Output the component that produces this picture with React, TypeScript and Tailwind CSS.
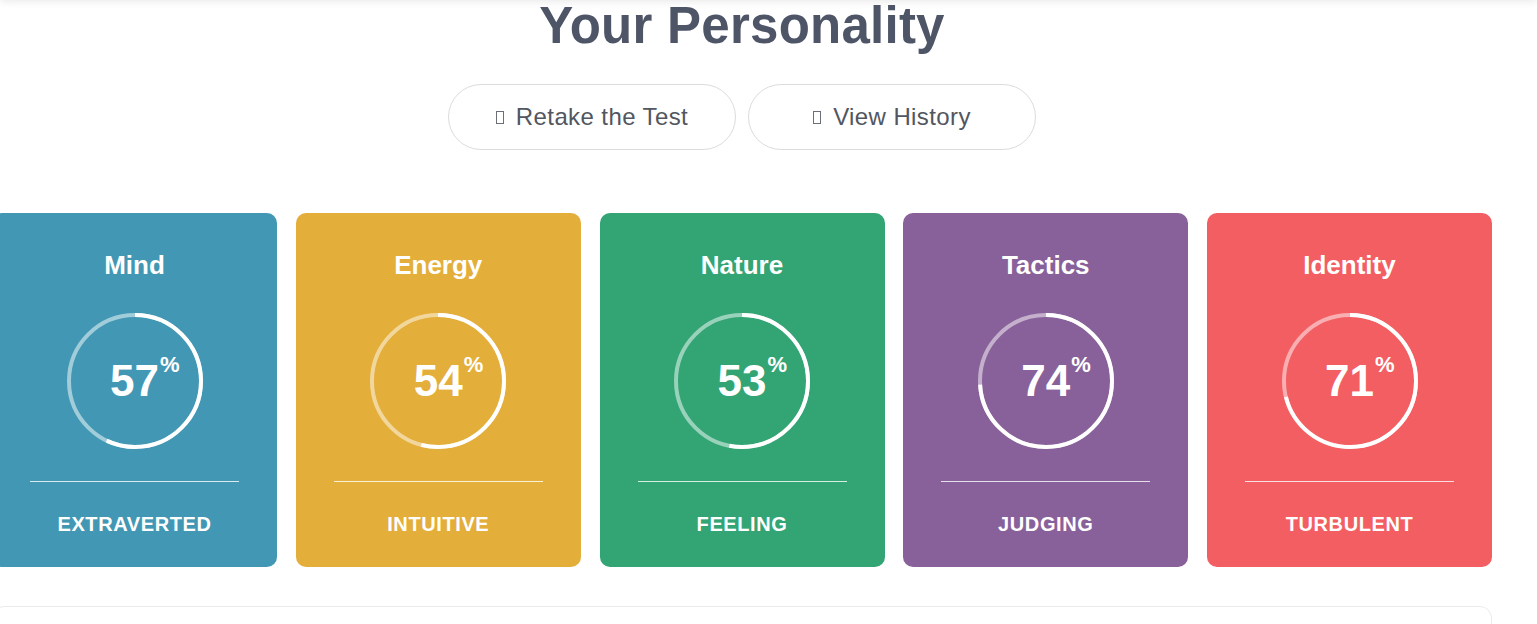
import React from "react";

type Trait = {
  title: string;
  value: number;
  label: string;
  bg: string;
};

const traits: Trait[] = [
  { title: "Mind", value: 57, label: "Extraverted", bg: "bg-[#4298b4]" },
  { title: "Energy", value: 54, label: "Intuitive", bg: "bg-[#e4ae3a]" },
  { title: "Nature", value: 53, label: "Feeling", bg: "bg-[#33a474]" },
  { title: "Tactics", value: 74, label: "Judging", bg: "bg-[#88619a]" },
  { title: "Identity", value: 71, label: "Turbulent", bg: "bg-[#f25e62]" },
];

const R = 66;
const C = 2 * Math.PI * R;

function Ring({ value }: { value: number }) {
  return (
    <div className="relative mx-auto mt-[35px] h-[136px] w-[136px]">
      <svg width="136" height="136" viewBox="0 0 136 136" className="absolute inset-0 -rotate-90">
        <circle cx="68" cy="68" r={R} fill="none" stroke="rgba(255,255,255,0.5)" strokeWidth="4" />
        <circle
          cx="68"
          cy="68"
          r={R}
          fill="none"
          stroke="#ffffff"
          strokeWidth="4"
          strokeDasharray={`${(C * value) / 100} ${C}`}
        />
      </svg>
      <div className="flex h-full w-full items-center justify-center">
        <span className="relative text-[44px] font-bold leading-none text-white">
          {value}
          <span className="absolute left-full top-[-5px] ml-[1px] text-[22px] font-bold leading-none">%</span>
        </span>
      </div>
    </div>
  );
}

function TraitCard({ t }: { t: Trait }) {
  return (
    <div className={`${t.bg} flex w-[285px] shrink-0 flex-col rounded-[10px] px-[38px] pb-[33px] pt-[39px] text-center text-white`}>
      <h3 className="text-[26px] font-bold leading-none">{t.title}</h3>
      <Ring value={t.value} />
      <div className="mt-[32px] h-px w-full bg-white/80" />
      <p className="mt-[32px] text-[20px] font-bold uppercase leading-none tracking-[0.6px]">{t.label}</p>
    </div>
  );
}

function Tofu() {
  return <span className="mr-[12px] inline-block h-[13px] w-[8px] border border-[#6b6f78] align-[-1px]" />;
}

export default function App() {
  return (
    <div className="min-h-screen overflow-hidden bg-white font-['Liberation_Sans',Arial,sans-serif]">
      <div className="fixed left-0 top-[-40px] z-10 h-[40px] w-full bg-white shadow-[0_0_9px_rgba(0,0,0,0.12)]" />
      <div className="ml-[-8px] w-[1500px]">
        <h1 className="text-center text-[51px] font-bold leading-none tracking-[0.25px] text-[#4e5567]">Your Personality</h1>

        <div className="mt-[33px] flex justify-center gap-[12px]">
          <button className="flex h-[66px] w-[288px] items-center justify-center rounded-full border border-[#dcdcdc] bg-white text-[24px] tracking-[0.4px] text-[#525660]">
            <Tofu />
            Retake the Test
          </button>
          <button className="flex h-[66px] w-[288px] items-center justify-center rounded-full border border-[#dcdcdc] bg-white text-[24px] tracking-[0.4px] text-[#525660]">
            <Tofu />
            View History
          </button>
        </div>

        <div className="mt-[63px] flex justify-between">
          {traits.map((t) => (
            <TraitCard key={t.title} t={t} />
          ))}
        </div>

        <div className="mt-[39px] h-[80px] rounded-[12px] border border-[#ebebeb] bg-white" />
      </div>
    </div>
  );
}
